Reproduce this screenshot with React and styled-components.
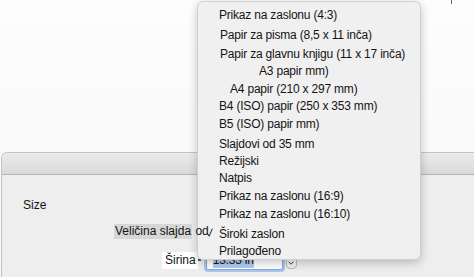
import React from 'react';
import styled, { createGlobalStyle } from 'styled-components';

const Global = createGlobalStyle`
  html, body { margin: 0; padding: 0; width: 474px; height: 277px; overflow: hidden; background: #fafafa; }
  #root { width: 474px; height: 277px; }
`;

const Page = styled.div`
  position: relative;
  width: 474px;
  height: 277px;
  display: flex;
  flex-direction: column;
  font-family: "Liberation Sans", Arial, sans-serif;
  font-size: 12px;
  color: #141414;
  background: linear-gradient(#fdfdfd, #f6f6f6);
  overflow: hidden;
`;

const Desktop = styled.div`
  height: 152px;
  flex: none;
`;

const Dialog = styled.div`
  flex: 1;
  margin-left: 1px;
  margin-right: -10px;
  border: 1px solid #c4c4c4;
  border-bottom: none;
  border-radius: 6px 6px 0 0;
  background: #eeeeee;
  display: flex;
  flex-direction: column;
  overflow: hidden;
`;

const TitleBar = styled.div`
  height: 21px;
  flex: none;
  background: linear-gradient(#ebebeb, #d9d9d9);
  border-bottom: 1px solid #b4b4b4;
`;

const Body = styled.div`
  padding: 23px 0 0 21px;
  display: flex;
  flex-direction: column;
`;

const Line = styled.div`
  display: flex;
  align-items: center;
  line-height: 15px;
  margin-top: ${p => p.$mt || 0}px;
  padding-left: ${p => p.$indent || 0}px;
  position: relative;
  z-index: ${p => p.$above ? 3 : 0};
`;

const Highlight = styled.span`
  background: #d6d6d6;
  padding: 0 1px;
`;

const WhiteLabel = styled.span`
  background: #ffffff;
  padding: 1px 2px 1px 3px;
  position: relative;
  z-index: 3;
`;

const Dot = styled.span`
  width: 3px;
  height: 2px;
  background: #555;
  margin: 0 5px 0 0;
`;

const Field = styled.div`
  width: 69px;
  height: 18px;
  background: #fff;
  border: 1px solid #8aa9d8;
  box-shadow: 0 0 0 2px #a9c6ee;
  border-radius: 2px;
  display: flex;
  align-items: center;
  padding-left: 6px;
  letter-spacing: -0.2px;
`;

const Selected = styled.span`
  background: #b3cdf0;
  color: #1a1a1a;
`;

const Stepper = styled.div`
  width: 9px;
  height: 10px;
  margin: 5px 0 0 3px;
  border: 1px solid #b9b9b9;
  border-radius: 4px;
  background: linear-gradient(#fdfdfd, #ececec);
  display: flex;
  align-items: center;
  justify-content: center;
`;

const Menu = styled.div`
  position: absolute;
  left: 197px;
  top: 1px;
  width: 224px;
  height: 259px;
  border: 1px solid #cfcfcf;
  border-radius: 6px;
  background: #f0f0f0;
  box-shadow: 0 3px 10px rgba(0, 0, 0, 0.22);
  padding-top: 5px;
  box-sizing: border-box;
  display: flex;
  flex-direction: column;
  z-index: 2;
`;

const Item = styled.div`
  position: relative;
  height: 18px;
  line-height: 18px;
  flex: none;
  white-space: nowrap;
  letter-spacing: -0.2px;
  margin-top: ${p => p.$mt}px;
  padding-left: ${p => p.$x}px;
`;

const Check = styled.svg`
  position: absolute;
  left: 9px;
  top: 3px;
`;

const Tick = styled.div`
  position: absolute;
  left: 451px;
  top: 0;
  width: 1px;
  height: 4px;
  background: #666;
`;

const items = [
  { t: 'Prikaz na zaslonu (4:3)', x: 21, mt: -1 },
  { t: 'Papir za pisma (8,5 x 11 inča)', x: 22, mt: 2 },
  { t: 'Papir za glavnu knjigu (11 x 17 inča)', x: 22, mt: 1 },
  { t: 'A3 papir mm)', x: 61, mt: -1 },
  { t: 'A4 papir (210 x 297 mm)', x: 32, mt: 0 },
  { t: 'B4 (ISO) papir (250 x 353 mm)', x: 21, mt: -1 },
  { t: 'B5 (ISO) papir mm)', x: 21, mt: 0 },
  { t: 'Slajdovi od 35 mm', x: 21, mt: 2 },
  { t: 'Režijski', x: 21, mt: -1 },
  { t: 'Natpis', x: 21, mt: -1 },
  { t: 'Prikaz na zaslonu (16:9)', x: 21, mt: 0 },
  { t: 'Prikaz na zaslonu (16:10)', x: 21, mt: 0 },
  { t: 'Široki zaslon', x: 21, mt: 2, checked: true },
  { t: 'Prilagođeno', x: 21, mt: -1 },
];

export default function App() {
  return (
    <Page>
      <Global />
      <Desktop />
      <Tick />
      <Dialog>
        <TitleBar />
        <Body>
          <Line>Size</Line>
          <Line $mt={11} $indent={91} $above>
            <Highlight>Veličina slajda</Highlight>&nbsp;od
          </Line>
          <Line $mt={11} $indent={139}>
            <WhiteLabel>Širina</WhiteLabel>
            <Dot />
            <Field>
              <Selected>13.33 in</Selected>
            </Field>
            <Stepper>
              <svg width="6" height="4" viewBox="0 0 6 4">
                <path d="M0.5 0.6 L3 3.2 L5.5 0.6" fill="none" stroke="#444" strokeWidth="1" />
              </svg>
            </Stepper>
          </Line>
        </Body>
      </Dialog>
      <Menu>
        {items.map(it => (
          <Item key={it.t} $x={it.x} $mt={it.mt}>
            {it.checked && (
              <Check width="6" height="9" viewBox="0 0 6 9">
                <path d="M0.6 5.6 L2.2 8.2 L5.4 0.6" fill="none" stroke="#222" strokeWidth="1" />
              </Check>
            )}
            {it.t}
          </Item>
        ))}
      </Menu>
    </Page>
  );
}
